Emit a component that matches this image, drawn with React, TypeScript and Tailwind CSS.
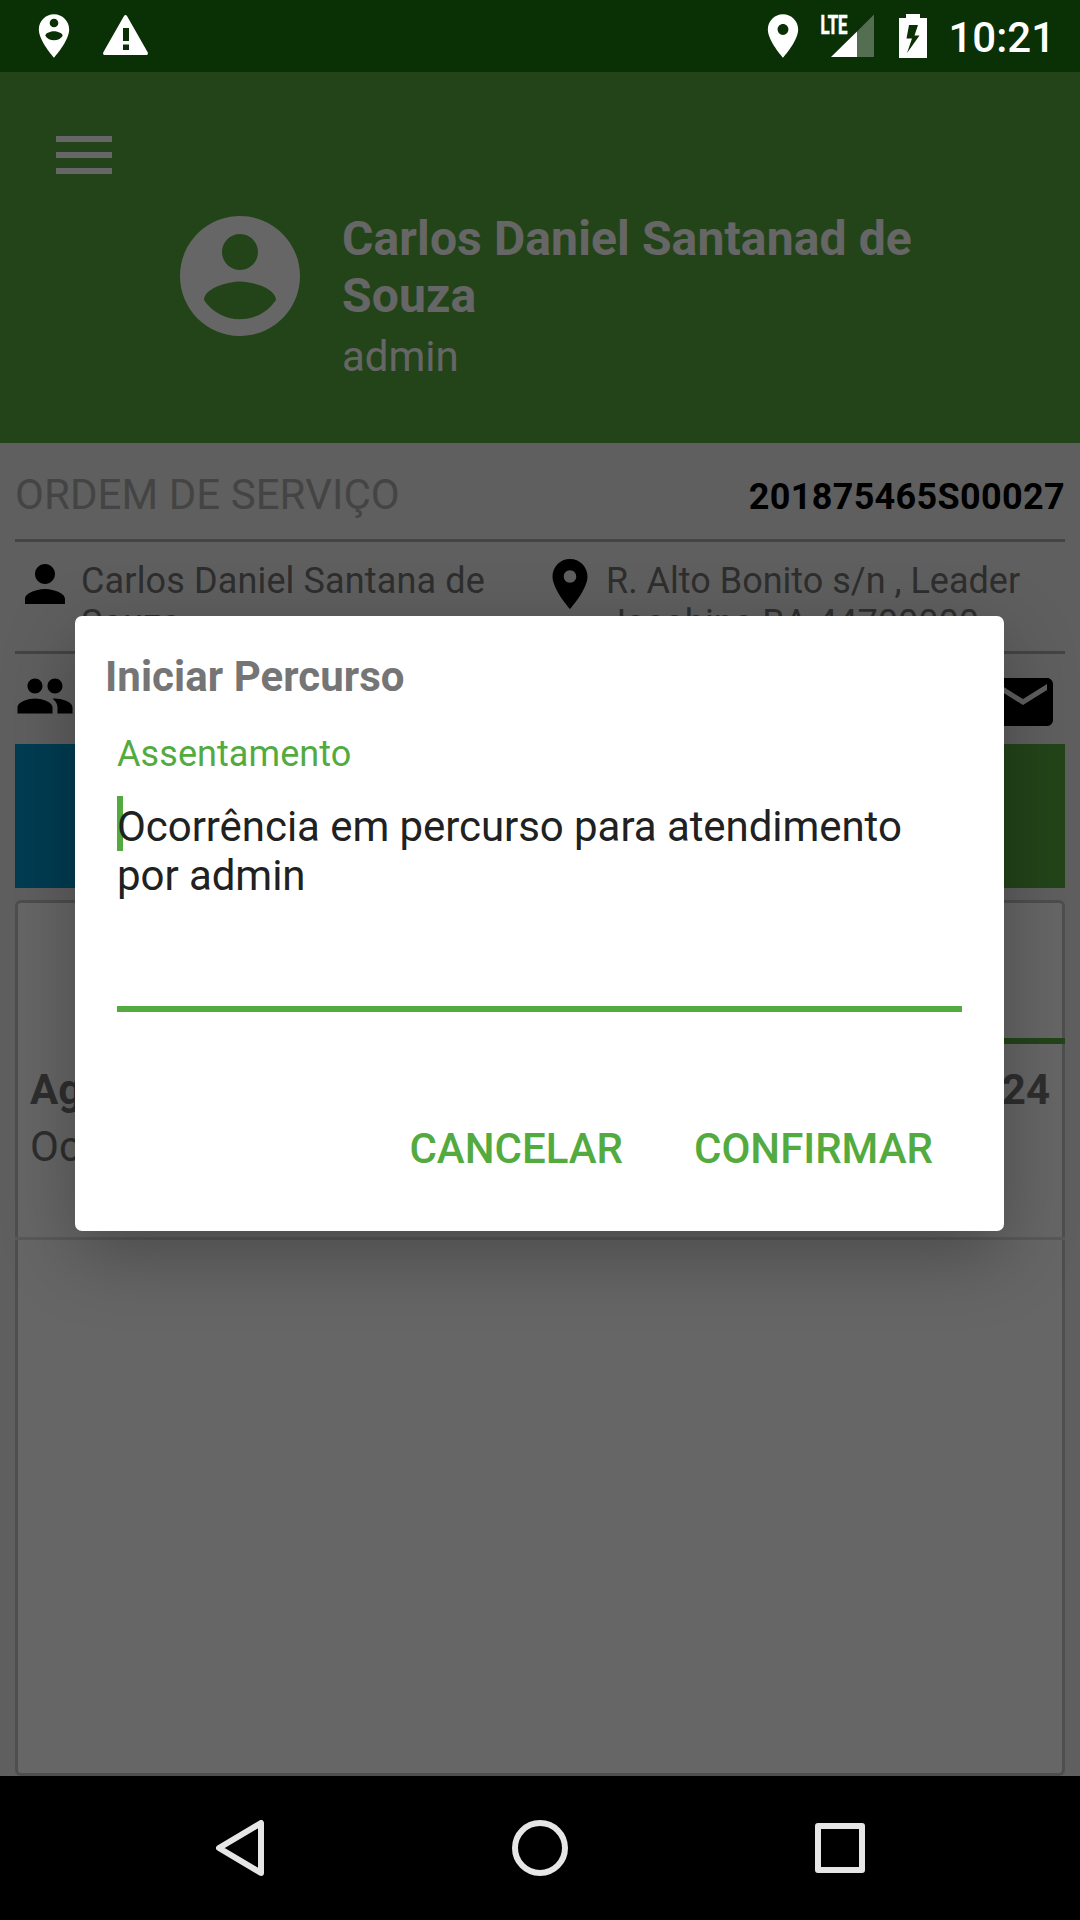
import type { ReactNode } from 'react';

const PERSON_PIN = 'M12 2C8.14 2 5 5.14 5 9c0 5.25 7 13 7 13s7-7.75 7-13c0-3.86-3.14-7-7-7zm0 2c1.1 0 2 .9 2 2 0 1.11-.9 2-2 2s-2-.89-2-2c0-1.1.9-2 2-2zm0 10c-1.67 0-3.14-.85-4-2.15.02-1.32 2.67-2.05 4-2.05s3.98.73 4 2.05c-.86 1.3-2.33 2.15-4 2.15z';
const PLACE = 'M12 2C8.13 2 5 5.13 5 9c0 5.25 7 13 7 13s7-7.75 7-13c0-3.87-3.13-7-7-7zm0 9.5c-1.38 0-2.5-1.12-2.5-2.5s1.12-2.5 2.5-2.5 2.5 1.12 2.5 2.5-1.12 2.5-2.5 2.5z';
const ACCOUNT = 'M12 2C6.48 2 2 6.48 2 12s4.48 10 10 10 10-4.48 10-10S17.52 2 12 2zm0 3c1.66 0 3 1.34 3 3s-1.34 3-3 3-3-1.34-3-3 1.34-3 3-3zm0 14.2c-2.5 0-4.71-1.28-6-3.22.03-1.99 4-3.08 6-3.08 1.99 0 5.97 1.09 6 3.08-1.29 1.94-3.5 3.22-6 3.22z';
const PERSON = 'M12 12c2.21 0 4-1.79 4-4s-1.79-4-4-4-4 1.79-4 4 1.79 4 4 4zm0 2c-2.67 0-8 1.34-8 4v2h16v-2c0-2.66-5.33-4-8-4z';
const GROUP = 'M16 11c1.66 0 2.99-1.34 2.99-3S17.66 5 16 5c-1.66 0-3 1.34-3 3s1.34 3 3 3zm-8 0c1.66 0 2.99-1.34 2.99-3S9.66 5 8 5C6.34 5 5 6.34 5 8s1.34 3 3 3zm0 2c-2.33 0-7 1.17-7 3.5V19h14v-2.5c0-2.33-4.67-3.5-7-3.5zm8 0c-.29 0-.62.02-.97.05 1.16.84 1.97 1.97 1.97 3.45V19h6v-2.5c0-2.33-4.67-3.5-7-3.5z';
const MAIL = 'M20 4H4c-1.1 0-1.99.9-1.99 2L2 18c0 1.1.9 2 2 2h16c1.1 0 2-.9 2-2V6c0-1.1-.9-2-2-2zm0 4l-8 5-8-5V6l8 5 8-5v2z';

function Icon({ path, className }: { path: string; className: string }) {
    return (
        <svg viewBox="0 0 24 24" fill="currentColor" className={`shrink-0 ${className}`}>
            <path d={path} />
        </svg>
    );
}

function StatusBar() {
    return (
        <div className="flex h-[72px] shrink-0 items-start justify-between bg-[#0a3005] pl-7 pr-[25px] text-white">
            <div className="flex">
                <Icon path={PERSON_PIN} className="mt-[10px] size-[52px]" />
                <svg viewBox="0 0 45 40" className="ml-[23px] mt-[15px] h-[40px] w-[45px]">
                    <path
                        fillRule="evenodd"
                        fill="currentColor"
                        d="M21 1q1.500-2 3 0L44.800 37.500q.5 2.500-1.500 2.500H1.700Q-.3 40 .2 37.500zM20 13v13h6V13zM20 29.500v5.500h6v-5.500z"
                    />
                </svg>
            </div>
            <div className="flex">
                <Icon path={PLACE} className="mt-[10px] size-[52px]" />
                <svg viewBox="0 0 54 44" className="ml-[11px] mt-[14px] h-[44px] w-[54px] overflow-visible">
                    <text
                        x=".5"
                        y="19.500"
                        fill="currentColor"
                        stroke="currentColor"
                        strokeWidth=".7"
                        fontSize="26"
                        textLength="27"
                        lengthAdjust="spacingAndGlyphs"
                        className="font-bold"
                    >
                        LTE
                    </text>
                    <path d="M37 17.500 54 .5V43H37z" fill="currentColor" opacity=".3" />
                    <path d="M37 17.500V43H11z" fill="currentColor" />
                </svg>
                <svg viewBox="0 0 28 44" className="ml-[25px] mt-[14px] h-[44px] w-[28px]">
                    <path
                        fillRule="evenodd"
                        fill="currentColor"
                        d="M7 0h14v4h7v40H0V4h7zM10 11 7.500 24.500h5.500L8 39 20.500 21.500h-5L19 11z"
                    />
                </svg>
                <span className="ml-[21px] mt-[13px] text-[42px] leading-[50px] font-medium">10:21</span>
            </div>
        </div>
    );
}

function Header() {
    return (
        <header className="h-[371px] shrink-0 bg-[#58aa3f] text-white">
            <div className="flex flex-col gap-[10px] pl-14 pt-16">
                <span className="h-[6px] w-14 bg-white" />
                <span className="h-[6px] w-14 bg-white" />
                <span className="h-[6px] w-14 bg-white" />
            </div>
            <div className="flex pl-[168px] pt-[30px]">
                <Icon path={ACCOUNT} className="size-36" />
                <div className="ml-[30px] mt-[6px] w-[600px]">
                    <h1 className="text-[48px] leading-[57px] font-bold tracking-[0.13px]">Carlos Daniel Santanad de Souza</h1>
                    <p className="mt-2 text-[42px] leading-[50px]">admin</p>
                </div>
            </div>
        </header>
    );
}

function InfoItem({ path, children }: { path: string; children: ReactNode }) {
    return (
        <div className="flex w-[525px]">
            <Icon path={path} className="mt-3 size-[60px] text-black" />
            <p className="ml-[6px] mt-[18px] text-[36px] leading-[42px] text-[#737373]">{children}</p>
        </div>
    );
}

function ServiceOrder() {
    return (
        <main className="flex flex-1 flex-col bg-[#eeeeee] px-[15px]">
            <div className="flex h-[99px] shrink-0 items-baseline justify-between border-b-[3px] border-[#aaaaaa] pt-[27px]">
                <span className="text-[42px] leading-[50px] tracking-[0.06px] text-[#aaaaaa]">ORDEM DE SERVIÇO</span>
                <span className="text-[36px] leading-[42px] font-bold tracking-[0.33px] text-black">201875465S00027</span>
            </div>
            <div className="flex h-[112px] shrink-0 border-b-[3px] border-[#aaaaaa]">
                <InfoItem path={PERSON}>
                    <span className="tracking-[0.14px]">Carlos Daniel Santana de Souza</span>
                </InfoItem>
                <InfoItem path={PLACE}>
                    R. Alto Bonito s/n , Leader
                    <br />
                    Jacobina BA 44700000
                </InfoItem>
            </div>
            <div className="flex h-[90px] shrink-0 items-start justify-between pr-[6px] pt-3">
                <Icon path={GROUP} className="size-[60px] text-black" />
                <Icon path={MAIL} className="size-[72px] text-black" />
            </div>
            <div className="flex h-36 shrink-0">
                <button className="flex-1 bg-[#0096cd]" />
                <button className="flex-1 bg-[#58aa3f]" />
            </div>
            <div className="mt-3 flex flex-1 flex-col rounded-[6px] border-[3px] border-[#c4c4c4] bg-white">
                <div className="-mx-[3px] flex h-[141px]">
                    <span className="flex-1" />
                    <span className="flex-1 border-b-[6px] border-[#58aa3f]" />
                </div>
                <div className="-mx-[3px] h-[196px] border-b-[3px] border-[#dedede] px-[15px] pt-[21px] text-[42px] text-[#737373]">
                    <div className="flex justify-between leading-[50px] font-bold">
                        <span>Agente</span>
                        <span>10:21:24</span>
                    </div>
                    <p className="mt-[7px] leading-[50px]">Ocorrência</p>
                </div>
            </div>
        </main>
    );
}

function StartRouteDialog() {
    return (
        <div className="flex h-[615px] w-[929px] flex-col rounded-[7px] bg-white shadow-[0_24px_72px_rgba(0,0,0,0.28)]">
            <h2 className="ml-[30px] mt-[36px] text-[42px] leading-[50px] font-bold tracking-[0.05px] text-[#757575]">Iniciar Percurso</h2>
            <div className="mx-[42px] mt-[31px]">
                <label className="block text-[36px] leading-[42px] tracking-[0.08px] text-[#53ab3f]">Assentamento</label>
                <div className="relative mt-[21px] h-[216px] border-b-[6px] border-[#53ab3f]">
                    {/* text cursor */}
                    <span className="absolute left-0 top-0 h-[55px] w-[6px] bg-[#53ab3f]" />
                    <p className="relative pt-[6px] text-[42px] leading-[49px] tracking-[-0.06px] text-[#212121]">
                        Ocorrência em percurso para atendimento por admin
                    </p>
                </div>
            </div>
            <div className="mt-[112px] flex justify-end gap-[71px] pr-[71px] text-[42px] leading-[50px] font-medium text-[#53ab3f]">
                <button>CANCELAR</button>
                <button>CONFIRMAR</button>
            </div>
        </div>
    );
}

function NavigationBar() {
    return (
        <nav className="flex h-36 shrink-0 items-start justify-between bg-black pl-[216px] pr-[215px] pt-11">
            <svg viewBox="0 0 48 56" fill="none" stroke="#e6e6e6" strokeWidth="6" strokeLinejoin="round" className="h-14 w-12">
                <path d="M45 3v50L3 28z" />
            </svg>
            <svg viewBox="0 0 56 56" fill="none" stroke="#e6e6e6" strokeWidth="6" className="size-14">
                <circle cx="28" cy="28" r="25" />
            </svg>
            <svg viewBox="0 0 50 50" fill="none" stroke="#e6e6e6" strokeWidth="6" strokeLinejoin="round" className="mt-[3px] size-[50px]">
                <path d="M3 3h44v44H3z" />
            </svg>
        </nav>
    );
}

export default function App() {
    return (
        <div className="relative flex h-[1920px] w-[1080px] flex-col overflow-hidden font-['Roboto',sans-serif]">
            <StatusBar />
            <Header />
            <ServiceOrder />
            <NavigationBar />
            {/* Modal backdrop */}
            <div className="absolute inset-x-0 top-[72px] bottom-36 flex items-start overflow-hidden bg-black/60 pl-[75px] pt-[544px]">
                <StartRouteDialog />
            </div>
        </div>
    );
}
